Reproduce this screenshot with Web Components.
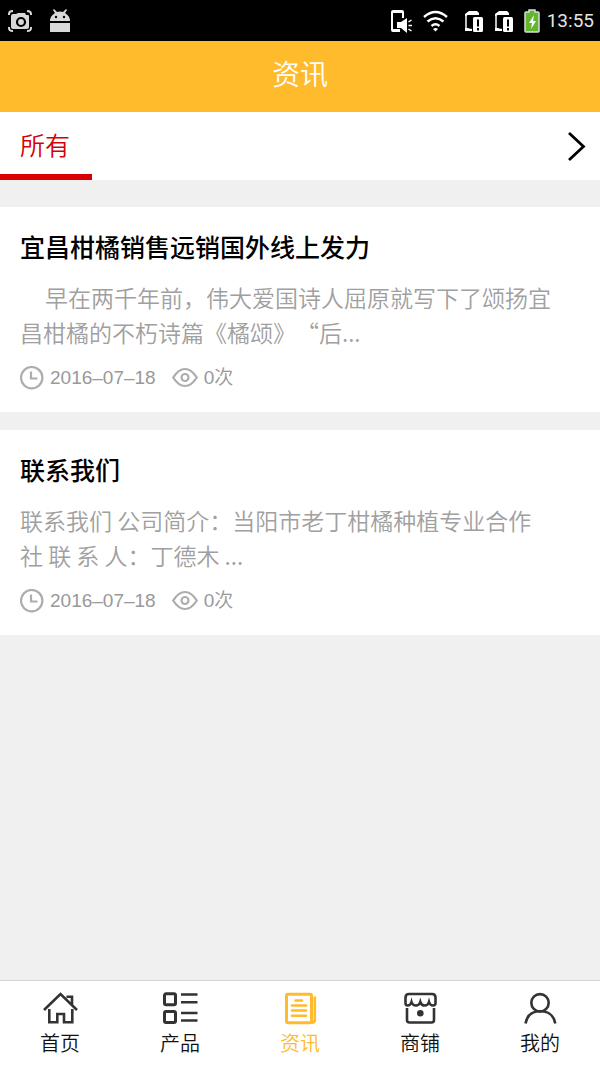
<!DOCTYPE html>
<html lang="zh-CN">
<head>
<meta charset="utf-8">
<meta name="viewport" content="width=device-width, initial-scale=1">
<title>资讯</title>
<style>
  html, body { margin: 0; background: #f0f0f0; }
  body { font-family: "Noto Sans CJK SC", "Noto Sans", sans-serif; color: #000; }
</style>
</head>
<body>
<news-app></news-app>

<template id="t-status">
  <style>
    :host { display: flex; align-items: center; height: 41px; padding: 0 6px 0 7px; background: #000; color: #e4e4e4; font: 19px/24px Roboto, sans-serif; }
    svg { display: block; height: 24px; }
    .left, .right, .signal, .clock { display: flex; align-items: center; }
    .left { gap: 16px; flex: 1; }
    .right { gap: 16px; }
    .signal { gap: 11px; }
    .clock { gap: 7px; }
  </style>
  <div class="left">
    <svg width="26" viewBox="0 0 26 24" aria-hidden="true">
      <path d="M2 6V5q0-3 4-3M20 2q4 0 4 3v1M2 18v1q0 3 4 3M20 22q4 0 4-3v-1" fill="none" stroke="#d8d8d8" stroke-width="2"/>
      <path d="M6 5h3l2-1h7l1 2h2q1 0 1 1v11q0 2-2 2H6q-2 0-2-2V7q0-2 2-2z" fill="#d8d8d8"/>
      <circle cx="14" cy="13" r="4" fill="none" stroke="#000" stroke-width="2.200"/>
    </svg>
    <svg width="22" viewBox="0 0 22 24" aria-hidden="true">
      <path d="M1 12Q1 7 6 4L4 1l1-1 3 3q3-1 6 0l3-3 1 1-2 3q5 3 5 8zM1 14h20v9H1z" fill="#d8d8d8"/>
      <circle cx="7" cy="8" r="1.200"/><circle cx="15" cy="8" r="1.200"/>
    </svg>
  </div>
  <div class="right">
    <div class="signal">
      <svg width="22" viewBox="0 0 22 24" aria-hidden="true">
        <path d="M13 9V3q0-1-1-1H3Q2 2 2 3v18q0 1 1 1h7" fill="none" stroke="#fff" stroke-width="2"/>
        <path d="M2 2h11v2H2zM2 20h8v3H3z" fill="#fff"/>
        <path d="M7 13h4l6-4v15l-6-5H7z" fill="#fff"/>
        <path d="M18.500 13l3-2M18.500 16.500h3.500M18.500 20l3 2" stroke="#fff" stroke-width="1.500"/>
      </svg>
      <svg width="25" viewBox="0 0 25 24" aria-hidden="true">
        <path d="M1 8q11.500-10 23 0M4.500 12.500q8-6.500 16 0M8.500 17q4-3.500 8 0" fill="none" stroke="#fff" stroke-width="2.400"/>
        <path d="M10 20q2.500-2 5 0l-2.500 2.500z" fill="#fff"/>
      </svg>
    </div>
    <div class="signal">
      <svg width="19" viewBox="0 0 19 24" aria-hidden="true">
        <path d="M2 21V6M2 20.500h6" fill="none" stroke="#fff" stroke-width="1.500"/><path d="M1 7V5l4-3h8l2 2v2H4zM1 19h3l4 2v1H1z" fill="#fff"/>
        <rect x="9" y="8" width="10" height="15" rx="1.500" fill="#fff"/><path d="M14 10.500v7M14 19v2.500" stroke="#000" stroke-width="2"/>
      </svg>
      <svg width="19" viewBox="0 0 19 24" aria-hidden="true">
        <path d="M2 21V6M2 20.500h6" fill="none" stroke="#fff" stroke-width="1.500"/><path d="M1 7V5l4-3h8l2 2v2H4zM1 19h3l4 2v1H1z" fill="#fff"/>
        <rect x="9" y="8" width="10" height="15" rx="1.500" fill="#fff"/><path d="M14 10.500v7M14 19v2.500" stroke="#000" stroke-width="2"/>
      </svg>
      <div class="clock">
        <svg width="16" viewBox="0 0 16 24" aria-hidden="true">
          <path d="M5 1h6v2h3q1 0 1 1v18q0 1-1 1H2q-1 0-1-1V4q0-1 1-1h3z" fill="#62b52c" stroke="#ddd" stroke-width="1.500"/>
          <path d="M10 6l-5 8h3l-1 6 5-8H9z" fill="#fff"/>
        </svg>
        <time>13:55</time>
      </div>
    </div>
  </div>
</template>

<template id="t-header">
  <style>
    :host { display: block; background: #ffbb2c; color: #fff; }
    h1 { margin: 0; padding: 14px 0 21px; font-size: 28px; line-height: 36px; font-weight: 350; text-align: center; }
  </style>
  <h1><slot></slot></h1>
</template>

<template id="t-tabs">
  <style>
    :host { display: flex; justify-content: space-between; background: #fff; }
    a { box-sizing: border-box; height: 68px; padding: 14px 22px 0 20px; border-bottom: 6px solid #d80005; color: #d80005; font-size: 25px; line-height: 36px; font-weight: 350; text-decoration: none; }
    button { border: 0; background: none; padding: 0 12px; display: flex; align-items: center; cursor: pointer; }
  </style>
  <a href="#all" aria-current="page"><slot></slot></a>
  <button type="button" aria-label="更多分类">
    <svg width="22" height="32" viewBox="0 0 22 32" aria-hidden="true"><path d="M3 3l14.500 13.500L3 30" fill="none" stroke="#000" stroke-width="2.800"/></svg>
  </button>
</template>

<template id="t-card">
  <style>
    :host { display: block; background: #fff; padding: 24px 20px 22px; }
    h2 { margin: 0 0 19px; font-size: 25px; line-height: 30px; font-weight: 500; }
    .summary { margin-bottom: 16px; font-size: 23px; line-height: 35px; font-weight: 350; color: #a0a0a0; text-spacing-trim: space-all; }
    .meta { display: flex; gap: 16px; color: #999; font: 19px/24px "Liberation Sans", "Noto Sans CJK SC", sans-serif; font-weight: 350; }
    .item { display: flex; align-items: center; gap: 6px; }
    svg { display: block; fill: none; stroke: #adadad; stroke-width: 2.200; }
  </style>
  <article>
    <h2><slot name="title"></slot></h2>
    <div class="summary"><slot></slot></div>
    <div class="meta">
      <div class="item">
        <svg width="24" height="24" viewBox="0 0 24 24" aria-hidden="true"><circle cx="11.700" cy="11.700" r="10.700"/><path d="M11 5.500v7h6.500"/></svg>
        <slot name="date"></slot>
      </div>
      <div class="item">
        <svg width="26" height="24" viewBox="0 0 26 24" aria-hidden="true"><path d="M1.200 11.500Q6.500 3 13 3t11.800 8.500Q19.500 20 13 20T1.200 11.500z"/><circle cx="13" cy="11.500" r="3.500"/></svg>
        <slot name="views"></slot>
      </div>
    </div>
  </article>
</template>

<template id="t-item">
  <style>
    :host { display: block; flex: 1; color: #111; }
    :host([active]) { color: #ffbb2c; --icon: #ffbb2c; }
    a { display: flex; flex-direction: column; align-items: center; gap: 6px; padding: 10px 0 12px; color: inherit; text-decoration: none; font-size: 20px; line-height: 24px; font-weight: 350; }
    ::slotted(svg) { display: block; width: 36px; height: 34px; fill: none; stroke: var(--icon, #333); stroke-width: 2.600; }
  </style>
  <a><slot name="icon"></slot><span><slot></slot></span></a>
</template>

<template id="t-nav">
  <style>
    :host { display: block; background: #fff; border-top: 1px solid #d2d2d2; position: sticky; bottom: 0; }
    nav { display: flex; }
  </style>
  <nav aria-label="主导航">
    <nav-item href="#home"><svg slot="icon" viewBox="0 0 36 34" aria-hidden="true"><path d="M2 19L18.500 3 35 19M24.500 5.700H30V14M7.300 18v13.300h8V23H22v8.300h8.300V18"/></svg>首页</nav-item>
    <nav-item href="#products"><svg slot="icon" viewBox="0 0 36 34" aria-hidden="true"><g stroke-width="3"><rect x="2.500" y="2.800" width="11" height="11" rx="1.500"/><rect x="2.500" y="20.500" width="11" height="11" rx="1.500"/></g><path d="M19 3.500h16.500M19 11.300h16.500M19 22h16.500M19 29.500h16.500"/></svg>产品</nav-item>
    <nav-item href="#news" active><svg slot="icon" viewBox="0 0 36 34" aria-hidden="true"><rect x="4.500" y="3.200" width="25" height="28.500" rx="1.500" stroke-width="3"/><path d="M32.800 5.500V29q0 2.700-3 2.700" stroke-width="2.600"/><path d="M13.500 9.500H20M10 14.500h14M10 19.500h14M10 24.700h14" stroke-width="2.600" stroke-linecap="round"/></svg>资讯</nav-item>
    <nav-item href="#shop"><svg slot="icon" viewBox="0 0 36 34" aria-hidden="true"><path d="M7 3h23q3.500 0 3.500 3.500V12q0 2.500-2.500 2.500-3 0-4-3.500-1 3.500-4.300 3.500T18.300 11q-1 3.500-4.400 3.500T9.500 11q-1 3.500-4 3.500Q3.500 14.500 3.500 12V6.500Q3.500 3 7 3zM5 17v12q0 2.500 2.500 2.500h22q2.500 0 2.500-2.500V17"/><circle cx="18.300" cy="22.200" r="3.300" fill="#333" stroke="none"/></svg>商铺</nav-item>
    <nav-item href="#me"><svg slot="icon" viewBox="0 0 36 34" aria-hidden="true"><circle cx="18" cy="11.800" r="8.700"/><path d="M3.500 32.500C5 24 11 20.300 18.300 20.300S32 24 33.300 32.500"/></svg>我的</nav-item>
  </nav>
</template>

<template id="t-app">
  <style>
    :host { display: flex; flex-direction: column; min-height: 100vh; }
    main { flex: 1; display: flex; flex-direction: column; gap: 18px; padding: 27px 0 18px; }
    p { margin: 0; }
    .indent { text-indent: 25px; }
  </style>
  <status-bar></status-bar>
  <page-header>资讯</page-header>
  <category-tabs>所有</category-tabs>
  <main>
    <news-card>
      <span slot="title">宜昌柑橘销售远销国外线上发力</span>
      <p class="indent">早在两千年前，伟大爱国诗人屈原就写下了颂扬宜<br>昌柑橘的不朽诗篇《橘颂》“后...</p>
      <time slot="date" datetime="2016-07-18">2016–07–18</time>
      <span slot="views">0次</span>
    </news-card>
    <news-card>
      <span slot="title">联系我们</span>
      <p>联系我们 公司简介：当阳市老丁柑橘种植专业合作<br>社 联 系 人：丁德木 ...</p>
      <time slot="date" datetime="2016-07-18">2016–07–18</time>
      <span slot="views">0次</span>
    </news-card>
  </main>
  <bottom-nav></bottom-nav>
</template>

<script>
  class TemplateElement extends HTMLElement {
    constructor() {
      super();
      const template = document.getElementById(this.constructor.template);
      this.attachShadow({ mode: "open" }).append(template.content.cloneNode(true));
    }
  }
  customElements.define("status-bar", class extends TemplateElement { static template = "t-status"; });
  customElements.define("page-header", class extends TemplateElement { static template = "t-header"; });
  customElements.define("category-tabs", class extends TemplateElement { static template = "t-tabs"; });
  customElements.define("news-card", class extends TemplateElement { static template = "t-card"; });
  customElements.define("nav-item", class extends TemplateElement {
    static template = "t-item";
    connectedCallback() {
      const link = this.shadowRoot.querySelector("a");
      link.href = this.getAttribute("href");
      if (this.hasAttribute("active")) link.setAttribute("aria-current", "page");
    }
  });
  customElements.define("bottom-nav", class extends TemplateElement { static template = "t-nav"; });
  customElements.define("news-app", class extends TemplateElement { static template = "t-app"; });
</script>
</body>
</html>
